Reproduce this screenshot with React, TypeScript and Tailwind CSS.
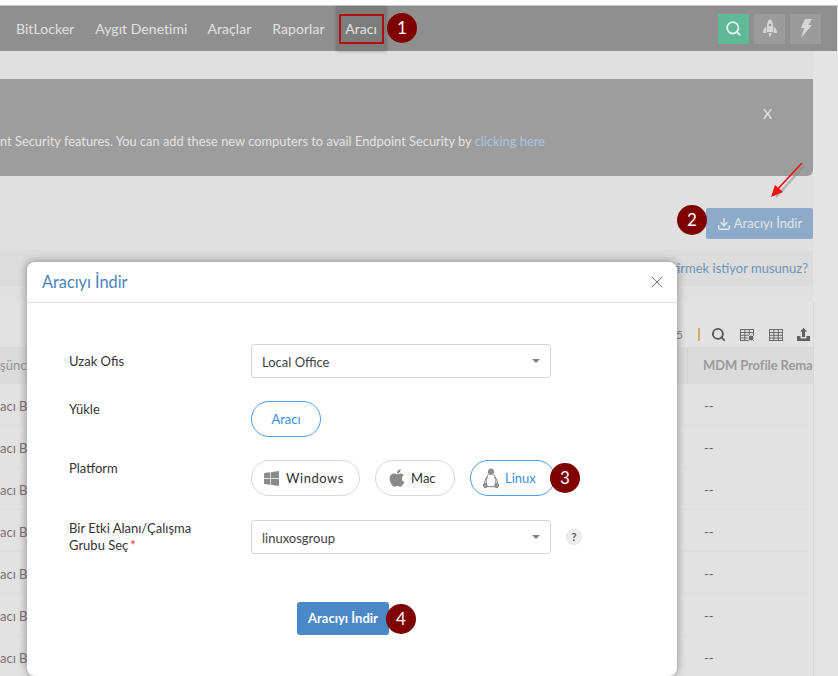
import React from "react";
import { FaApple, FaWindows } from "react-icons/fa";
import { LuDownload, LuSearch, LuX } from "react-icons/lu";

const navItems = ["BitLocker", "Aygıt Denetimi", "Araçlar", "Raporlar"];
const rows = [0, 1, 2, 3, 4, 5, 6];

const Badge = ({ n, className }: { n: number; className: string }) => (
  <div
    className={`absolute w-[30px] h-[30px] rounded-full bg-[#800000] text-white text-[17px] flex items-center justify-center z-20 ${className}`}
  >
    {n}
  </div>
);

const Caret = () => (
  <span className="w-0 h-0 border-l-[4px] border-r-[4px] border-t-[4px] border-l-transparent border-r-transparent border-t-[#808080]" />
);

const Select = ({ value }: { value: string }) => (
  <div className="w-[300px] h-[34px] border border-[#d5d5d5] rounded-[3px] flex items-center justify-between pl-[10px] pr-[10px] text-[13px] text-[#444444]">
    <span className="pt-[4px]">{value}</span>
    <Caret />
  </div>
);

const Tux = () => (
  <svg width="18" height="21" viewBox="0 0 18 21" fill="none" stroke="#6a6a6a" strokeWidth="0.9">
    <path d="M9 0.500c2 0 3.200 1.600 3.200 3.600 0 1.600-.6 2.800-3.200 2.800S5.800 5.700 5.800 4.100C5.800 2.100 7 .5 9 .5z" fill="#8d8d8d" stroke="none" />
    <path d="M6.300 6.500C5.200 8.700 2.700 11.500 2.500 15.500M11.700 6.500c1.100 2.200 3.600 5 3.800 9" />
    <path d="M6 9c-1.800 2-2.300 5.500-1 8M12 9c1.800 2 2.300 5.500 1 8" strokeWidth="0.7" />
    <path d="M1 17l2.600-1.800 2 3.300-2.600 1.500zM17 17l-2.600-1.800-2 3.300 2.600 1.500z" fill="#a0a0a0" />
    <path d="M5.500 18.700h7" />
  </svg>
);

const RocketIcon = () => (
  <svg width="16" height="20" viewBox="0 0 16 20" fill="#d6d6d6">
    <path d="M8 0c2 1.600 3 4 3 6.500V13H5V6.500C5 4 6 1.600 8 0z" />
    <path d="M4.300 7.500V14H1c0-2.800 1.200-5 3.300-6.500zM11.700 7.500V14H15c0-2.800-1.200-5-3.300-6.500z" />
    <path d="M6.500 14h3L8 19z" />
    <circle cx="8" cy="6" r="1.200" fill="#8f8f8f" />
  </svg>
);

const BoltIcon = () => (
  <svg width="12" height="19" viewBox="0 0 12 19" fill="#d6d6d6">
    <path d="M5 0h7L8.500 6H12L1 19l3.300-10H1z" />
  </svg>
);

const GridIcon = ({ gear }: { gear?: boolean }) => (
  <svg width="14" height="12" viewBox="0 0 14 12" fill="none" stroke="#6a6a6a" strokeWidth="1">
    <rect x="0.500" y="0.500" width="13" height="11" />
    <path d="M0 3.500h14M0 6.300h14M0 9h14M4.800 0v12M9.300 0v12" />
    {gear && <circle cx="11" cy="9" r="3" fill="#6a6a6a" stroke="#e2e2e2" />}
  </svg>
);

const App = () => {
  return (
    <div className="relative w-[838px] h-[676px] overflow-hidden bg-[#e4e4e4] font-['Lato',sans-serif]">
      <div className="h-[5px] bg-white" />
      <div className="h-[1px] bg-[#c8c8c8]" />

      {/* top nav */}
      <div className="h-[45px] bg-[#8f8f8f] flex items-center justify-between pl-[16px] pr-[16px] mr-[1px]">
        <div className="flex items-center h-full text-[14px] tracking-[0.05px] text-[#e2e2e2]">
          <span className="mr-[21px]">{navItems[0]}</span>
          <span className="mr-[20px]">{navItems[1]}</span>
          <span className="mr-[21px]">{navItems[2]}</span>
          <span className="mr-[11px]">{navItems[3]}</span>
          <div className="h-full w-[51px] bg-[#7c7c7c] shadow-[0_1px_3px_rgba(0,0,0,0.2)] flex items-center justify-center">
            <span className="w-[45px] h-[30px] border-2 border-[#b00d0d] flex items-center justify-center">Aracı</span>
          </div>
        </div>
        <div className="flex gap-[5px]">
          <div className="w-[31px] h-[30px] bg-[#5fb996] flex items-center justify-center text-[#e4efe9]">
            <LuSearch size={17} strokeWidth={2.6} />
          </div>
          <div className="w-[31px] h-[30px] bg-[#9b9b9b] flex items-center justify-center">
            <RocketIcon />
          </div>
          <div className="w-[31px] h-[30px] bg-[#9b9b9b] flex items-center justify-center">
            <BoltIcon />
          </div>
        </div>
      </div>

      {/* page behind the overlay */}
      <div className="w-[813px] h-[625px] bg-[#e0e0e0] pt-[28px]">
        <div className="h-[97px] bg-[#9d9d9d] rounded-br-[6px] flex flex-col pr-[40px]">
          <div className="h-[62px] pt-[24px] text-right text-[14px] text-[#e6e6e6] pr-[1px]">X</div>
          <div className="text-[12.85px] text-[#e3e3e3] whitespace-nowrap -mt-[9px]">
            nt Security features. You can add these new computers to avail Endpoint Security by{" "}
            <span className="text-[#a9c5e0]">clicking here</span>
          </div>
        </div>

        <div className="flex justify-end mt-[32px]">
          <div className="w-[107px] h-[31px] bg-[#8dabc9] rounded-[2px] flex items-center justify-center gap-[3px] text-[13px] text-[#dfe5ea]">
            <LuDownload size={14} strokeWidth={2.6} />
            Aracıyı İndir
          </div>
        </div>

        <div className="h-[37px] mt-[11px] bg-[#dcdcdc] flex items-center justify-end pr-[5px] text-[13px] text-[#6f93b4]">
          Cihaz eklemek veya değiştirmek istiyor musunuz?
        </div>

        <div className="h-[15px]" />
        <div className="w-[814px] border-r border-[#d6d6d6]">
          <div className="h-[46px] bg-[#e2e2e2] border-b border-[#d9d9d9] flex items-center justify-end pt-[20px] pr-[3px] text-[#555555]">
            <span className="text-[12px] text-[#8a8a8a] mr-[15px]">5</span>
            <span className="w-[2px] h-[13px] bg-[#cfa96e] mr-[11px]" />
            <LuSearch size={15} strokeWidth={3} className="mr-[14px]" />
            <span className="mr-[15px]">
              <GridIcon gear />
            </span>
            <span className="mr-[14px]">
              <GridIcon />
            </span>
            <svg width="13" height="13" viewBox="0 0 13 13" fill="#606060">
              <path d="M6.500 0l3.500 3.500H8V9H5V3.500H3zM0 8h3.500v2.500h6V8H13v5H0z" />
            </svg>
          </div>

          <div className="h-[36px] bg-[#dbdbdb] flex items-center text-[13px] text-[#9a9a9a]">
            <span className="w-[688px] whitespace-nowrap border-r border-[#cfcfcf] h-full flex items-center">
              <span className="-ml-[17px] text-[#939393]">Düşünce</span>
            </span>
            <span className="pl-[15px] whitespace-nowrap font-bold tracking-[-0.1px]">MDM Profile Rema</span>
          </div>

          {rows.map((r) => (
            <div key={r} className="h-[42px] bg-[#e2e2e2] border-b border-[#dfdfdf] flex items-center pt-[4px] text-[13px]">
              <span className="w-[704px] whitespace-nowrap text-[#7d6f74]">acı Ba</span>
              <span className="text-[#666666]">--</span>
            </div>
          ))}
        </div>
      </div>

      {/* annotations on the page */}
      <Badge n={1} className="left-[387px] top-[13px]" />
      <Badge n={2} className="left-[677px] top-[205px]" />
      <svg className="absolute left-[765px] top-[158px]" width="45" height="48" viewBox="0 0 45 48">
        <path d="M39 8L11 39" stroke="#8a8a8a" strokeWidth="2.500" opacity="0.5" />
        <path d="M37 5L9 35" stroke="#f01212" strokeWidth="1.800" />
        <path d="M6 39l4-12 8 7z" fill="#f01212" />
      </svg>

      {/* modal */}
      <div className="absolute left-[27px] top-[262px] w-[650px] h-[414px] bg-white rounded-[8px] shadow-[0_0_10px_rgba(0,0,0,0.4)] z-10">
        <div className="h-[41px] border-b border-[#dddddd] flex items-center justify-between pl-[15px] pr-[10px]">
          <span className="text-[16.300px] text-[#4a84bb]">Aracıyı İndir</span>
          <LuX size={20} strokeWidth={1} className="text-[#555555]" />
        </div>

        <div className="pl-[42px] pt-[41px] text-[13px] text-[#333333]">
          <div className="flex h-[34px]">
            <div className="w-[182px] pt-[8px]">Uzak Ofis</div>
            <Select value="Local Office" />
          </div>

          <div className="flex h-[36px] mt-[23px]">
            <div className="w-[182px] -mt-[1px]">Yükle</div>
            <div className="w-[70px] h-[36px] rounded-full border border-[#4a9dee] text-[#3f90dd] flex items-center justify-center pt-[1px]">
              Aracı
            </div>
          </div>

          <div className="flex h-[36px] mt-[23px]">
            <div className="w-[182px] -mt-[1px]">Platform</div>
            <div className="flex gap-[15px]">
              <div className="w-[109px] h-[36px] rounded-full border border-[#d8d8d8] flex items-center pl-[11px] gap-[6px]">
                <FaWindows size={17} className="text-[#8a8a8a]" />
                <span className="tracking-[0.55px] pt-[1px]">Windows</span>
              </div>
              <div className="w-[80px] h-[36px] rounded-full border border-[#d8d8d8] flex items-center pl-[11px] gap-[4px]">
                <FaApple size={20} className="text-[#8a8a8a]" />
                <span className="pt-[1px]">Mac</span>
              </div>
              <div className="w-[85px] h-[36px] rounded-full border border-[#4a9dee] text-[#3f90dd] flex items-center pl-[11px] gap-[5px]">
                <Tux />
                <span className="pt-[1px]">Linux</span>
              </div>
            </div>
          </div>

          <div className="flex mt-[24px]">
            <div className="w-[182px] leading-[17px]">
              Bir Etki Alanı/Çalışma
              <br />
              Grubu Seç<span className="text-[#e03030] ml-[2px]">*</span>
            </div>
            <Select value="linuxosgroup" />
            <div className="ml-[15px] mt-[9px] w-[16px] h-[16px] rounded-full bg-[#eeeeee] border border-[#e2e2e2] flex items-center justify-center text-[11px] font-bold text-[#555555]">
              ?
            </div>
          </div>

          <div className="flex pl-[228px] mt-[48px]">
            <div className="w-[92px] h-[33px] rounded-[3px] bg-[#4a88c7] text-white font-bold flex items-center justify-center pt-[1px]">
              Aracıyı İndir
            </div>
          </div>
        </div>

        <Badge n={3} className="left-[523px] top-[201px]" />
        <Badge n={4} className="left-[359px] top-[342px]" />
      </div>
    </div>
  );
};

export default App;
